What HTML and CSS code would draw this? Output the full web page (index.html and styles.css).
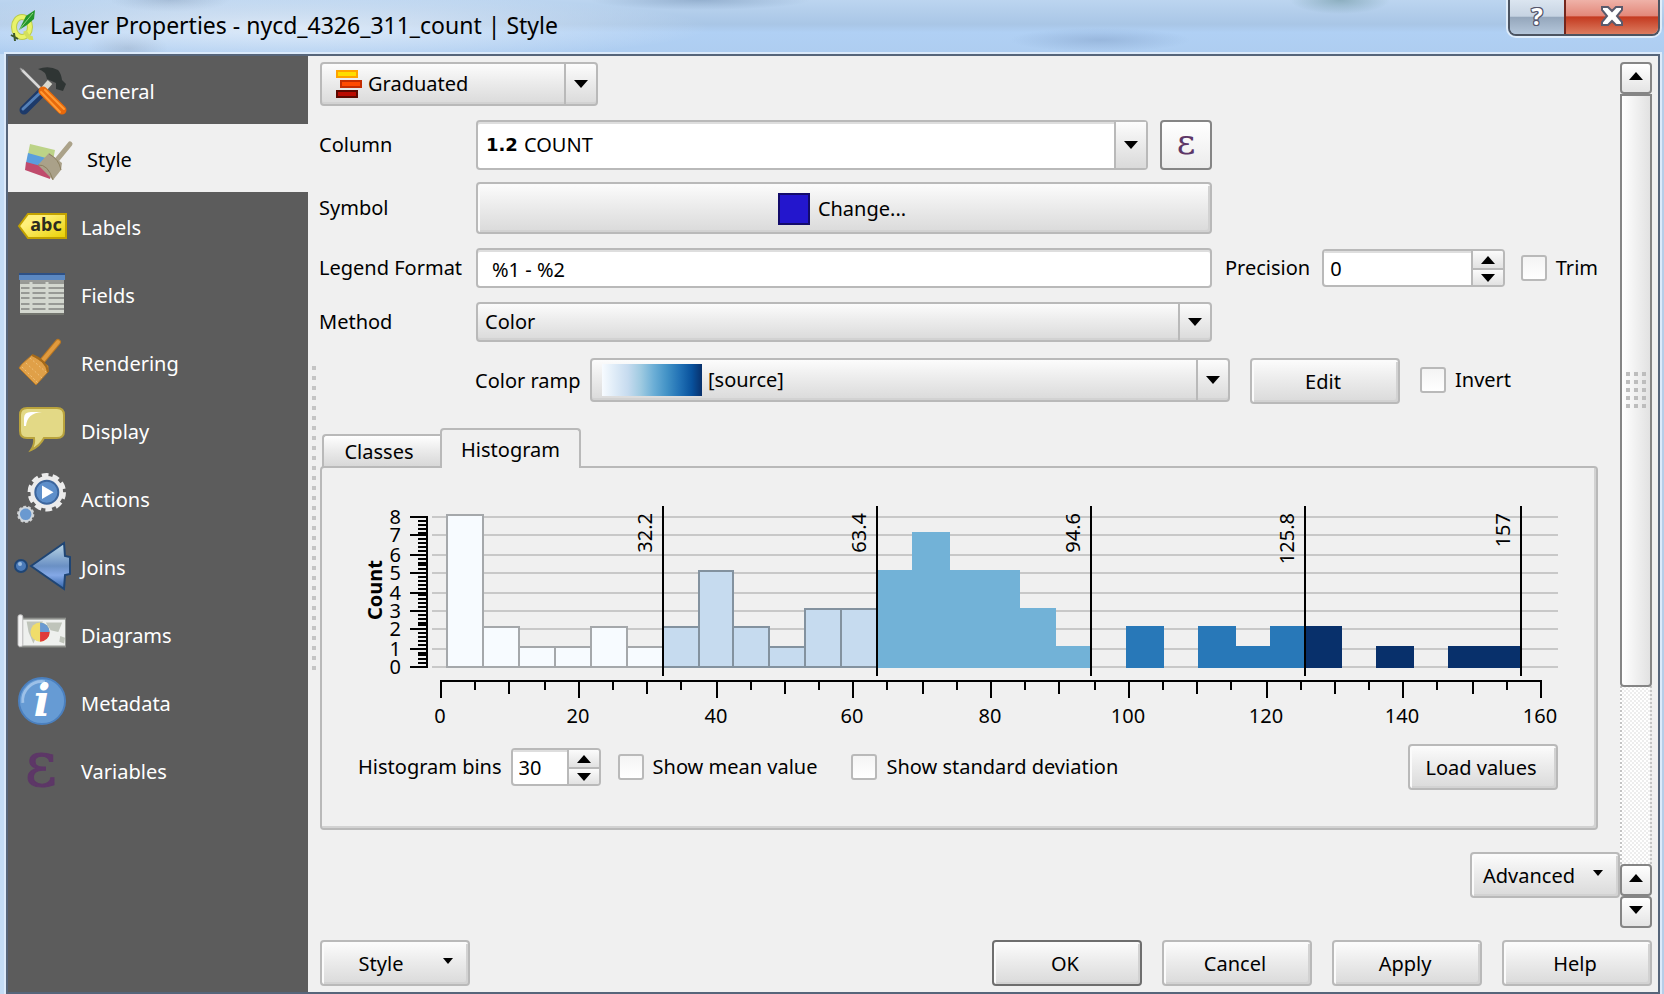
FILE: index.html
```html
<!DOCTYPE html>
<html lang="en">
<head>
<meta charset="utf-8">
<title>Layer Properties</title>
<link rel="stylesheet" href="styles.css">
</head>
<body>
<div class="window">
  <header class="titlebar">
    <svg class="app-icon" width="28" height="34" viewBox="0 0 28 34" aria-hidden="true">
      <ellipse cx="12" cy="18" rx="8" ry="10" fill="none" stroke="#b9cb4c" stroke-width="6"/>
      <ellipse cx="12" cy="18" rx="8" ry="10" fill="none" stroke="#e9f36a" stroke-width="4"/>
      <path d="M15 22q3 8 8 7" fill="none" stroke="#d3df5c" stroke-width="4"/>
      <path d="M9 21L16 7 25 1 24 10 17 16Z" fill="#23962a"/>
      <path d="M9 21L23 4" stroke="#8fd383" stroke-width="1"/>
      <path d="M1 26l7 4M4 24l1 8" stroke="#3e5a2e" stroke-width="2"/>
    </svg>
    <h1 class="title">Layer Properties - nycd_4326_311_count | Style</h1>
    <div class="caption-buttons">
      <button class="caption help" type="button" aria-label="Help">?</button>
      <button class="caption close" type="button" aria-label="Close">
        <svg width="24" height="22" viewBox="0 0 24 22"><path d="M2 2h6l4 4 4-4h6v3l-5 6 5 6v3h-6l-4-4-4 4H2v-3l5-6-5-6Z" fill="#fff" stroke="#5a5a6c" stroke-width="2"/></svg>
      </button>
    </div>
  </header>

  <div class="client">
    <nav class="sidebar">
      <a class="item" href="#general">
        <svg width="48" height="48" viewBox="0 0 48 48">
          <path d="M2 2l4 2 18 18-2 2L4 6Z" fill="#d8d8d8" stroke="#8f8f8f"/>
          <path d="M25 24l7-8" stroke="#d9d8cf" stroke-width="6"/>
          <path d="M20 3Q31-1 40 4q3 3 4 10l4 4-3 7-7-2 0-6-9-4Q28 5 20 3Z" fill="#2f3534"/>
          <path d="M24 26L6 44" stroke="#1d3a6a" stroke-width="9" stroke-linecap="round"/>
          <path d="M23 26L5 43" stroke="#5580b8" stroke-width="3" stroke-linecap="round"/>
          <path d="M25 25L44 44" stroke="#e8690b" stroke-width="9" stroke-linecap="round"/>
          <path d="M27 24L46 43M23 26L42 46" stroke="#ff9a35" stroke-width="2" stroke-linecap="round"/>
        </svg>
        <span>General</span>
      </a>
      <a class="item current" href="#style" aria-current="page">
        <svg width="48" height="48" viewBox="0 0 48 48">
          <path d="M6 10L31 16 29 27 4 20Z" fill="#bcd387"/>
          <path d="M4 19L29 26 28 37 2 29Z" fill="#5a9ede"/>
          <path d="M2 28L28 35 26 45 1 36Z" fill="#c04b6c"/>
          <path d="M32 27L46 10" stroke="#aba289" stroke-width="5" stroke-linecap="round"/>
          <path d="M25 19L38 29 37 36 29 46 14 31Z" fill="#aaa189"/>
          <path d="M14 31Q24 30 29 46M25 20Q35 25 37 36" fill="none" stroke="#8b7f5e"/>
        </svg>
        <span>Style</span>
      </a>
      <a class="item" href="#labels">
        <svg width="48" height="48" viewBox="0 0 48 48">
          <defs><linearGradient id="tag" x2="1" y2="1"><stop offset=".3" stop-color="#fff07a"/><stop offset="1" stop-color="#e9d000"/></linearGradient></defs>
          <path d="M1 24L10 12H48V36H10Z" fill="url(#tag)" stroke="#c3a200" stroke-width="2"/>
          <text x="28" y="29" class="tag-text">abc</text>
        </svg>
        <span>Labels</span>
      </a>
      <a class="item" href="#fields">
        <svg width="48" height="48" viewBox="0 0 48 48">
          <rect x="2" y="4" width="44" height="40" fill="#d3d7cf"/>
          <rect x="2" y="10" width="44" height="4" fill="#999b98"/>
          <rect x="1" y="3" width="46" height="7" fill="#5b88c2"/><rect x="1" y="3" width="46" height="2" fill="#2e5186"/>
          <path d="M3 13h43M3 18h43M3 23h43M3 28h43M3 34h43M3 39h43" stroke="#979995" stroke-width="2"/>
          <path d="M13 12v31M29 12v31" stroke="#d3d7cf" stroke-width="3"/>
          <path d="M2 44h44" stroke="#73756f" stroke-width="2"/>
        </svg>
        <span>Fields</span>
      </a>
      <a class="item" href="#rendering">
        <svg width="48" height="48" viewBox="0 0 48 48">
          <path d="M25 22L40 4" stroke="#b97722" stroke-width="6" stroke-linecap="round"/>
          <path d="M25 22L40 4" stroke="#e09a3e" stroke-width="4" stroke-linecap="round"/>
          <path d="M14 17L30 28 30 34 18 47 1 30 4 26Z" fill="#e0a048" stroke="#b87a26"/>
          <path d="M4 29L20 45M8 25L24 40M12 20L28 34" stroke="#efc078" stroke-dasharray="2 2"/>
          <path d="M14 17Q28 22 30 34" fill="none" stroke="#a56a1a" stroke-width="2"/>
        </svg>
        <span>Rendering</span>
      </a>
      <a class="item" href="#display">
        <svg width="48" height="48" viewBox="0 0 48 48">
          <path d="M9 2H39Q46 2 46 9V25Q46 32 39 32H26Q22 40 13 44Q17 38 16 32H9Q2 32 2 25V9Q2 2 9 2Z" fill="#e3d986" stroke="#b9a33d" stroke-width="2"/>
          <path d="M6 20V12Q6 6 13 6H24Q9 7 8 20Z" fill="#fff"/>
        </svg>
        <span>Display</span>
      </a>
      <a class="item" href="#actions">
        <svg width="50" height="52" viewBox="0 0 50 52">
          <circle cx="30" cy="20" r="18" fill="none" stroke="#ececec" stroke-width="4" stroke-dasharray="7 4.3"/>
          <circle cx="30" cy="20" r="17" fill="#ececec"/>
          <circle cx="30" cy="20" r="12" fill="#5e8fca" stroke="#3d669d" stroke-width="2"/>
          <path d="M25 13L37 20 25 27Z" fill="#fff"/>
          <circle cx="8" cy="43" r="8" fill="none" stroke="#cfcfcf" stroke-width="2" stroke-dasharray="3 2"/>
          <circle cx="8" cy="43" r="7" fill="#6a99d0" stroke="#cfd6dc" stroke-width="2"/>
        </svg>
        <span>Actions</span>
      </a>
      <a class="item" href="#joins">
        <svg class="bleed" width="58" height="48" viewBox="-1 0 58 48">
          <defs><linearGradient id="join" x2="0" y2="1"><stop stop-color="#bcd8e6"/><stop offset=".5" stop-color="#6a90c4"/><stop offset=".7" stop-color="#84a8e6"/><stop offset="1" stop-color="#2f62a8"/></linearGradient></defs>
          <path d="M18 24L51 1 52 14 57 15V32L52 33 51 47Z" fill="url(#join)" stroke="#1f4574" stroke-width="2"/>
          <circle cx="8" cy="24" r="6" fill="#4a7ab8" stroke="#1f4574" stroke-width="2"/>
          <circle cx="7" cy="22" r="2" fill="#9dbde0"/>
        </svg>
        <span>Joins</span>
      </a>
      <a class="item" href="#diagrams">
        <svg width="50" height="48" viewBox="0 0 50 48">
          <rect x="1" y="7" width="49" height="31" fill="#8d8f8b"/>
          <rect x="5" y="9" width="44" height="27" fill="#eef0ee"/>
          <path d="M9 11L26 11 22 20 16 34 11 22ZM29 12L46 12 42 22 34 20ZM44 26l5 2-1 6-5-2Z" fill="#bfc4ba"/>
          <rect x="0" y="4" width="5" height="33" rx="2" fill="#f4f4f4" stroke="#bbb"/>
          <circle cx="23" cy="22" r="10" fill="#f0dd6a"/>
          <path d="M23 22V12A10 10 0 0 1 33 22Z" fill="#6a9ad2"/>
          <path d="M23 22H33A10 10 0 0 1 23 32Z" fill="#e03a3a"/>
        </svg>
        <span>Diagrams</span>
      </a>
      <a class="item" href="#metadata">
        <svg width="50" height="52" viewBox="0 0 50 52">
          <circle cx="25" cy="25" r="24" fill="#669bd4" stroke="#4b80bf" stroke-width="2"/>
          <path d="M5 27A20 20 0 0 1 28 5" fill="none" stroke="#9dc1e8" stroke-width="3"/>
          <text x="25" y="41" class="info-text">i</text>
        </svg>
        <span>Metadata</span>
      </a>
      <a class="item" href="#variables">
        <svg width="50" height="52" viewBox="0 0 50 52"><text x="24" y="43" class="epsilon-text">ε</text></svg>
        <span>Variables</span>
      </a>
    </nav>

    <div class="splitter" aria-hidden="true"></div>

    <main class="main">
      <div class="scroll-area">
        <form class="form" id="style-form">
          <div class="combo renderer">
            <select aria-label="Renderer"><option>Graduated</option></select>
            <svg class="lead" width="26" height="28" viewBox="0 0 26 28" aria-hidden="true">
              <rect x="1" y="1" width="20" height="6" fill="#fd0" stroke="#ffa200" stroke-width="2"/>
              <rect x="5" y="11" width="20" height="6" fill="#ff4a00" stroke="#c42d00" stroke-width="2"/>
              <rect x="1" y="21" width="20" height="6" fill="#b90a00" stroke="#5c0800" stroke-width="2"/>
            </svg>
            <span class="drop"></span>
          </div>

          <div class="row tall">
            <label for="column">Column</label>
            <div class="field-pair">
              <div class="combo column light">
                <select id="column"><option>COUNT</option></select>
                <span class="lead type" aria-hidden="true">1.2</span>
                <span class="drop"></span>
              </div>
              <button class="btn expression" type="button" aria-label="Expression">
                <svg width="28" height="32" viewBox="0 0 28 32"><text x="14" y="25" class="epsilon-small">ε</text></svg>
              </button>
            </div>
          </div>

          <div class="row symbol">
            <span class="label">Symbol</span>
            <button class="btn" type="button"><span class="swatch"></span>Change...</button>
          </div>

          <div class="row low">
            <label for="legend">Legend Format</label>
            <input class="text" id="legend" type="text" value="%1 - %2">
            <div class="extra">
              <label class="precision" for="precision">Precision</label>
              <div class="spin">
                <input id="precision" type="text" inputmode="numeric" value="0">
                <button type="button" aria-label="Increase precision"><span class="tri up"></span></button>
                <button type="button" aria-label="Decrease precision"><span class="tri"></span></button>
              </div>
              <label class="check"><input type="checkbox">Trim</label>
            </div>
          </div>

          <div class="row low">
            <label for="method">Method</label>
            <div class="combo">
              <select id="method"><option>Color</option></select>
              <span class="drop"></span>
            </div>
          </div>

          <div class="row ramp-row">
            <label class="ramp-label" for="ramp">Color ramp</label>
            <div class="combo ramp">
              <select id="ramp"><option>[source]</option></select>
              <span class="lead ramp-swatch" aria-hidden="true"></span>
              <span class="drop"></span>
            </div>
            <div class="ramp-extra">
              <button class="btn wide" type="button">Edit</button>
              <label class="check"><input type="checkbox">Invert</label>
            </div>
          </div>

          <div class="tabs" role="tablist">
            <button class="tab" type="button" role="tab" aria-selected="false">Classes</button>
            <button class="tab active" type="button" role="tab" aria-selected="true">Histogram</button>
          </div>
          <section class="panel" role="tabpanel">
            <svg class="chart" id="chart" viewBox="0 0 1200 230" role="img" aria-label="Histogram"></svg>
            <div class="chart-options">
              <label for="bins">Histogram bins</label>
              <div class="spin small">
                <input id="bins" type="text" inputmode="numeric" value="30">
                <button type="button" aria-label="More bins"><span class="tri up"></span></button>
                <button type="button" aria-label="Fewer bins"><span class="tri"></span></button>
              </div>
              <label class="check mean"><input type="checkbox">Show mean value</label>
              <label class="check deviation"><input type="checkbox">Show standard deviation</label>
              <button class="btn wide load" type="button">Load values</button>
            </div>
          </section>

          <button class="btn wide advanced" type="button">Advanced<span class="tri tiny"></span></button>
        </form>

        <div class="scrollbar">
          <button type="button" aria-label="Scroll up"><span class="tri up"></span></button>
          <div class="track"><div class="thumb"><span class="grip"></span></div></div>
          <button type="button" aria-label="Page up"><span class="tri up"></span></button>
          <button type="button" aria-label="Scroll down"><span class="tri"></span></button>
        </div>
      </div>

      <footer class="actions">
        <button class="btn wide style-menu" type="button"><span>Style</span><span class="tri tiny"></span></button>
        <button class="btn wide default" type="button">OK</button>
        <button class="btn wide" type="button">Cancel</button>
        <button class="btn wide" type="button">Apply</button>
        <button class="btn wide" type="button">Help</button>
      </footer>
    </main>
  </div>
</div>
<script src="chart.js"></script>
</body>
</html>
```
FILE: styles.css
```css
* { box-sizing: border-box; }

body {
  margin: 0;
  font-family: "Noto Sans", "Open Sans", sans-serif;
  font-size: 20px;
  line-height: 28px;
  color: #000;
}

button, input, select { font: inherit; color: inherit; margin: 0; }

.window {
  min-height: 100vh;
  display: flex;
  flex-direction: column;
  background: linear-gradient(90deg, #c4dcf5, #b9d8fa 40%, #b5cee8);
}

/* Title bar */
.titlebar {
  height: 54px;
  display: flex;
  align-items: flex-start;
  padding-left: 10px;
  background:
    radial-gradient(ellipse 420px 34px at 290px 28px, rgba(235, 242, 250, .8), transparent),
    radial-gradient(ellipse 40px 16px at 128px 48px, rgba(140, 165, 195, .6), transparent),
    radial-gradient(ellipse 60px 12px at 170px 0, rgba(130, 155, 185, .5), transparent),
    radial-gradient(ellipse 110px 10px at 700px 0, rgba(110, 140, 175, .5), transparent),
    radial-gradient(ellipse 90px 12px at 1100px 40px, rgba(130, 160, 200, .5), transparent),
    radial-gradient(ellipse 50px 14px at 1340px 0, rgba(110, 150, 160, .6), transparent),
    linear-gradient(#bcd5f0, #a9c6e6 45%, #b0d0f4 60%, #aecdf0);
}

.app-icon { margin: 9px 12px 0 0; }

.title {
  flex: 1;
  margin: 8px 0 0;
  font-size: 23px;
  line-height: 34px;
  font-weight: 400;
}

.caption-buttons {
  display: flex;
  height: 36px;
  margin-right: 4px;
  border: 2px solid #4c5461;
  border-top: 0;
  border-radius: 0 0 8px 8px;
  box-shadow: 0 0 0 2px rgba(235, 244, 253, .8);
}

.caption {
  display: flex;
  align-items: center;
  justify-content: center;
  width: 54px;
  padding: 0 0 2px;
  border: 0;
  border-radius: 0 0 0 6px;
  background: linear-gradient(#dbe5f0, #c6d3e2 48%, #94a6bb 50%, #b4c6da);
}

.caption.help {
  font-weight: 700;
  font-size: 24px;
  color: #fff;
  text-shadow: 1px 0 #55566c, -1px 0 #55566c, 0 1px #55566c, 0 -1px #55566c, 1px 1px #55566c, -1px -1px #55566c, 1px -1px #55566c, -1px 1px #55566c;
}

.caption.close {
  width: 94px;
  border-left: 2px solid #74261c;
  border-radius: 0 0 6px 0;
  background: linear-gradient(#efb2a8, #e3887a 46%, #c43a20 50%, #dc7c60);
}

/* Client area */
.client {
  flex: 1;
  display: flex;
  margin: 0 4px 0 6px;
  border: 2px solid #56657a;
  box-shadow: 0 0 0 2px #dceafa;
  background: #f0f0f0;
}

.sidebar { width: 300px; flex: none; background: #5c5c5c; }

.item {
  display: flex;
  align-items: center;
  gap: 15px;
  height: 68px;
  padding: 4px 10px 0;
  color: #fff;
  text-decoration: none;
}

.item svg { flex: none; width: 48px; overflow: visible; margin-top: -4px; }
.item .bleed { width: 58px; margin-left: -6px; margin-right: -4px; }
.item.current { padding-left: 16px; background: #f0f0f0; color: #000; }

.tag-text { font: 700 18px "Noto Sans", sans-serif; text-anchor: middle; fill: #2b2b20; }
.info-text { font: italic 700 46px "DejaVu Serif", serif; text-anchor: middle; fill: #fff; }
.epsilon-text { font: 64px "DejaVu Serif", serif; text-anchor: middle; fill: #5d3767; stroke: #5d3767; }
.epsilon-small { font: 36px "DejaVu Serif", serif; text-anchor: middle; fill: #5d3767; }

.splitter {
  width: 4px;
  height: 306px;
  flex: none;
  align-self: center;
  margin: 0 2px 10px 4px;
  background: linear-gradient(#c4c4c4 4px, transparent 4px) 0 0 / 4px 10px;
}

.main { flex: 1; min-width: 0; display: flex; flex-direction: column; padding: 6px 6px 6px 0; }
.scroll-area { flex: 1; display: flex; }
.form { flex: 1; min-width: 0; display: flex; flex-direction: column; }

/* Shared control faces */
.btn, .combo, .spin, .text, .check input {
  border: 2px solid #b9b9b9;
  border-radius: 4px;
  background: linear-gradient(#fcfcfc, #ececec 45%, #dadada);
}

.btn {
  display: flex;
  align-items: center;
  justify-content: center;
  gap: 8px;
  padding: 2px 14px 0 10px;
  box-shadow: inset 2px 2px #fbfbfb, inset -2px -2px #d2d2d2;
}

.wide { width: 150px; height: 46px; flex: none; }

.tri {
  display: block;
  border: 7px solid transparent;
  border-top: 8px solid #000;
  border-bottom: 0;
}
.tri.up { border-top: 0; border-bottom: 8px solid #000; }
.tri.tiny { border-width: 6px 5px 0; }

.combo {
  display: grid;
  grid-template-columns: minmax(0, 1fr) 32px;
  box-shadow: inset 0 -2px #d2d2d2;
}
.combo select {
  grid-area: 1 / 1 / 2 / 3;
  width: 100%;
  appearance: none;
  border: 0;
  background: none;
  padding: 0 40px 0 7px;
}
.combo .lead { grid-area: 1 / 1; align-self: center; justify-self: start; pointer-events: none; }
.combo .drop {
  grid-area: 1 / 2;
  display: flex;
  align-items: center;
  justify-content: center;
  border-left: 2px solid #b9b9b9;
  pointer-events: none;
}
.drop::before {
  content: "";
  border: 7px solid transparent;
  border-top: 8px solid #000;
  border-bottom: 0;
}

.combo.light { background: #fff; box-shadow: inset 0 2px #dedede; }
.light .drop { background: linear-gradient(#fcfcfc, #ececec 45%, #dadada); }

.text {
  width: 100%;
  padding: 4px 14px 0;
  background: #fff;
  box-shadow: inset 0 2px #dedede;
}

.spin {
  display: grid;
  grid-template: 1fr 1fr / minmax(0, 1fr) 32px;
  width: 184px;
  height: 38px;
  background: #fff;
  overflow: hidden;
}
.spin input {
  grid-area: 1 / 1 / 3 / 2;
  min-width: 0;
  padding: 2px 6px 0;
  border: 0;
  background: none;
  box-shadow: inset 0 2px #dedede;
}
.spin button {
  display: flex;
  align-items: center;
  justify-content: center;
  padding: 0;
  border: 0;
  border-left: 2px solid #b9b9b9;
  background: linear-gradient(#fbfbfb, #e2e2e2);
}
.spin button:last-child { border-top: 2px solid #b9b9b9; }
.spin.small { width: 90px; }

.check { display: flex; align-items: center; gap: 9px; white-space: nowrap; }
.check input {
  appearance: none;
  width: 26px;
  height: 26px;
  border-radius: 3px;
  background: linear-gradient(#f4f4f4, #fff);
}

/* Form rows */
.renderer { width: 278px; height: 44px; margin-left: 2px; }
.renderer .lead { margin-left: 14px; }
.renderer select { padding-left: 46px; }

.row {
  display: grid;
  grid-template-columns: 158px minmax(0, 1fr) 386px;
  margin-right: 22px;
}
.row > label, .row > .label { align-self: center; padding-left: 1px; }
.tall { height: 50px; margin-top: 14px; }
.symbol { height: 52px; margin-top: 12px; }
.low { height: 40px; margin-top: 14px; }

.field-pair { display: flex; gap: 12px; }
.column { flex: 1; }
.column .type { margin-left: 8px; font: 700 18px/24px "DejaVu Sans", sans-serif; }
.column select { padding-left: 46px; }
.expression {
  width: 52px;
  padding: 0;
  border-color: #858585;
  background: linear-gradient(#fff, #ececec);
  box-shadow: none;
}

.swatch { width: 32px; height: 32px; border: 2px solid #130b6b; background: #2316cd; }

.extra { display: flex; align-items: center; padding-left: 13px; }
.precision { width: 98px; }
.extra .check { margin-left: 16px; }

.ramp-row { grid-template-columns: 272px minmax(0, 1fr) 368px; margin-top: 16px; height: 46px; }
.row > .ramp-label { padding-left: 157px; }
.ramp { height: 44px; }
.ramp-swatch {
  width: 100px;
  height: 32px;
  margin-left: 10px;
  background: linear-gradient(90deg, #f7fbff, #deebf7 13%, #c6dbef 26%, #9ecae1 39%, #6baed6 52%, #4292c6 65%, #2171b5 78%, #08519c 90%, #08306b);
}
.ramp select { padding-left: 116px; }
.ramp-extra { display: flex; align-items: center; gap: 20px; padding-left: 20px; }
.ramp-extra .check { margin-bottom: 2px; }

/* Tabs */
.tabs { display: flex; align-items: flex-end; margin: 24px 22px -2px 2px; padding-left: 2px; z-index: 1; }
.tab {
  height: 34px;
  width: 118px;
  padding: 2px 6px 0 0;
  border: 2px solid #b9b9b9;
  border-right: 0;
  border-radius: 4px 0 0 0;
  background: linear-gradient(#fff, #ececec 45%, #d8d8d8);
}
.tab.active {
  width: 141px;
  height: 40px;
  padding: 2px 0 0;
  border-right: 2px solid #b9b9b9;
  border-bottom: 0;
  border-radius: 4px 4px 0 0;
  background: #f0f0f0;
}

.panel {
  margin: 0 22px 0 2px;
  padding: 32px 38px 38px 36px;
  border: 2px solid #b9b9b9;
  border-radius: 4px;
  box-shadow: inset -2px -2px #d2d2d2;
}

.chart { display: block; width: 100%; overflow: visible; font-size: 20px; }
.chart .grid { stroke: #c8c8c8; stroke-width: 2; }
.chart .axis { stroke: #000; stroke-width: 2; fill: none; }
.chart .name { font-weight: 700; }
.chart .bar { stroke-width: 2; }

.chart-options { display: flex; align-items: center; margin-top: 14px; }
.chart-options .spin { margin-left: 9px; }
.mean { margin-left: 17px; }
.deviation { margin-left: 34px; }
.load { margin-left: auto; }

.advanced { align-self: flex-end; margin-top: 22px; gap: 18px; }
.advanced .tri { margin-top: -6px; }

/* Scroll bar */
.scrollbar { width: 32px; display: flex; flex-direction: column; margin-bottom: 12px; }
.scrollbar button {
  display: flex;
  align-items: center;
  justify-content: center;
  height: 32px;
  padding: 0 0 4px;
  border: 2px solid #858585;
  border-radius: 4px;
  background: linear-gradient(#fff, #e4e4e4);
}
.track {
  flex: 1;
  border: dotted #c4c4c4;
  border-width: 0 2px;
  background: repeating-conic-gradient(#ededed 0 25%, #fff 0 50%) 0 0 / 4px 4px;
}
.thumb {
  display: flex;
  align-items: center;
  justify-content: center;
  height: 77%;
  margin: 0 -2px;
  border: 2px solid #858585;
  border-radius: 0 0 4px 4px;
  background: linear-gradient(90deg, #fff, #e2e2e2);
}
.grip {
  width: 20px;
  height: 36px;
  background: linear-gradient(90deg, #bdbdbd 4px, transparent 4px) 0 0 / 8px 100%;
  mask: linear-gradient(#000 4px, transparent 4px) 0 0 / 100% 8px;
}

/* Footer */
.actions { display: flex; gap: 20px; padding-left: 2px; }
.style-menu { margin-right: auto; gap: 40px; padding: 2px 8px 0 30px; }
.style-menu .tri { margin-top: -6px; }
.default { border-color: #6e6e6e; }
```
FILE: chart.js
```js
const counts = [8, 2, 1, 1, 2, 1, 2, 5, 2, 1, 3, 3, 5, 7, 5, 5, 3, 1, 0, 2, 0, 2, 1, 2, 2, 0, 1, 0, 1, 1];
const breaks = [32.2, 63.4, 94.6, 125.8, 157];
const fills = ['#f7fbff', '#c6dbef', '#72b2d7', '#2878b8', '#08306b'];
const strokes = ['#a5a8ab', '#83929f', '#72b2d7', '#2878b8', '#08306b'];
const start = 1;
const binWidth = 5.2;

const even = (n) => Math.round(n / 2) * 2;
const X = (v) => even(82 + v * 6.875) + 1;
const Y = (c) => even(166 - c * 18.75) + 1;

const line = (cls, x1, y1, x2, y2) => `<path class="${cls}" d="M${x1} ${y1}L${x2} ${y2}"/>`;
const turned = (x, y, anchor, text, cls = '') =>
  `<text class="${cls}" x="${x}" y="${y}" text-anchor="${anchor}" transform="rotate(-90 ${x} ${y})">${text}</text>`;

let out = '';
for (let c = 0; c <= 8; c++) {
  out += line('grid', 74, Y(c), 1200, Y(c));
}

counts.forEach((c, i) => {
  if (!c) return;
  const k = Math.floor(i / 6);
  const left = X(start + i * binWidth);
  const right = X(start + (i + 1) * binWidth);
  const top = Y(c) - 2;
  out += `<rect class="bar" x="${left}" y="${top}" width="${right - left}" height="${Y(0) - top}" fill="${fills[k]}" stroke="${strokes[k]}"/>`;
});

breaks.forEach((b) => {
  out += line('axis', X(b), 6, X(b), 176);
  out += turned(X(b) - 11, 13, 'end', b);
});

out += line('axis', 69, Y(8) - 1, 69, Y(0) + 1);
for (let i = 0; i <= 40; i++) {
  const y = Y(i / 5);
  out += line('axis', i % 5 ? 60 : 52, y, 70, y);
}
for (let c = 0; c <= 8; c++) {
  out += `<text x="43" y="${Y(c) + 7}" text-anchor="end">${c}</text>`;
}
out += turned(24, 90, 'middle', 'Count', 'name');

out += line('axis', X(0) - 1, 181, X(160) + 1, 181);
for (let v = 0; v <= 160; v += 5) {
  const length = v % 20 === 0 ? 16 : v % 10 === 0 ? 12 : 8;
  out += line('axis', X(v), 182, X(v), 182 + length);
  if (v % 20 === 0) out += `<text x="${X(v) - 1}" y="223" text-anchor="middle">${v}</text>`;
}

document.getElementById('chart').innerHTML = out;
```
